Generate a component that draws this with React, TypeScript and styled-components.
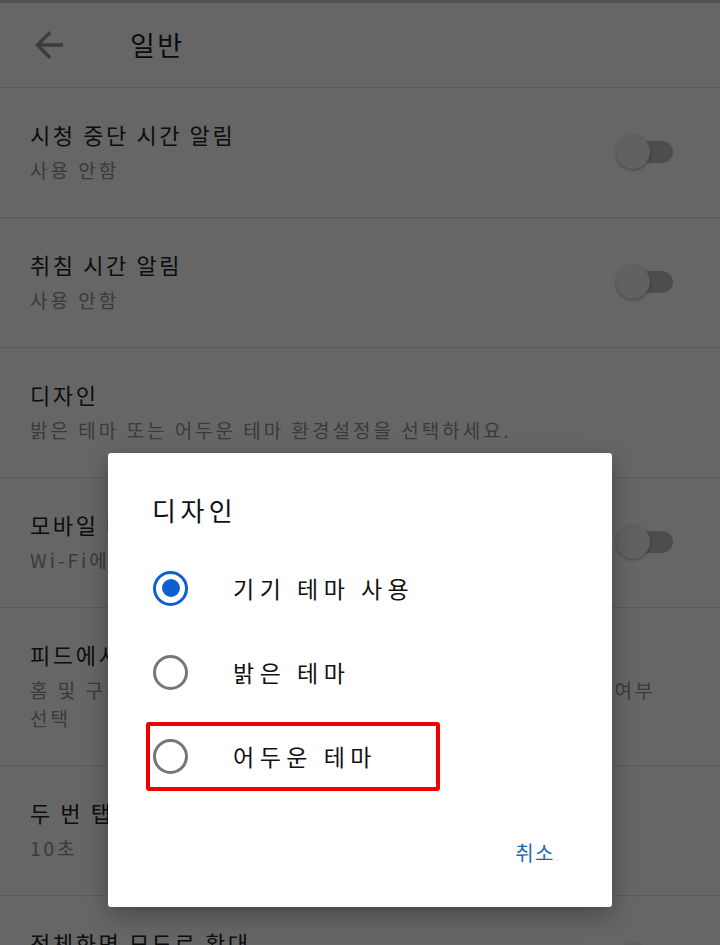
import React from "react";
import styled, { createGlobalStyle } from "styled-components";

const GlobalStyle = createGlobalStyle`
  html, body {
    margin: 0;
    padding: 0;
    background: #ffffff;
  }
  body {
    font-family: "Noto Sans CJK KR", "Noto Sans", "Liberation Sans", sans-serif;
  }
  * { box-sizing: border-box; }
`;

const Page = styled.div`
  position: relative;
  width: 720px;
  height: 945px;
  overflow: hidden;
  background: #ffffff;
`;

const TopStrip = styled.div`
  height: 3px;
  background: #d2d2d2;
`;

const Header = styled.header`
  height: 85px;
  display: flex;
  align-items: center;
  border-bottom: 1px solid #e2e2e2;
`;

const BackButton = styled.button`
  width: 42px;
  height: 42px;
  margin-left: 28px;
  padding: 0;
  border: none;
  background: transparent;
  display: flex;
  align-items: center;
  justify-content: center;
  color: #979797;
`;

const HeaderTitle = styled.h1`
  margin: 0 0 0 60px;
  font-size: 27px;
  font-weight: 400;
  letter-spacing: 2.5px;
  color: #222222;
  line-height: 36px;
`;

const List = styled.div`
  display: flex;
  flex-direction: column;
`;

const Row = styled.div`
  display: flex;
  align-items: center;
  padding: 31px 47px 33px 30px;
  border-bottom: 1px solid #e2e2e2;
`;

const RowText = styled.div`
  flex: 1;
  display: flex;
  flex-direction: column;
  gap: 7px;
  min-width: 0;
`;

const RowTitle = styled.div`
  font-size: 22px;
  line-height: 30px;
  letter-spacing: 2.6px;
  color: #232323;
`;

const RowSub = styled.div`
  font-size: 19px;
  line-height: 28px;
  letter-spacing: 3px;
  color: #919191;
`;

const ToggleWrap = styled.div`
  position: relative;
  flex: none;
  width: 57px;
  height: 34px;
  margin-left: 20px;
`;

const ToggleTrack = styled.div`
  position: absolute;
  right: 0;
  top: 6px;
  width: 50px;
  height: 22px;
  border-radius: 11px;
  background: #c0c0c0;
`;

const ToggleThumb = styled.div`
  position: absolute;
  left: 0;
  top: 0;
  width: 34px;
  height: 34px;
  border-radius: 50%;
  background: #f2f2f2;
  box-shadow: 0 1px 3px rgba(0, 0, 0, 0.35);
`;

const Toggle = () => (
  <ToggleWrap>
    <ToggleTrack />
    <ToggleThumb />
  </ToggleWrap>
);

const Overlay = styled.div`
  position: absolute;
  inset: 0;
  background: rgba(0, 0, 0, 0.6);
  display: flex;
  justify-content: center;
  align-items: flex-start;
  padding-top: 453px;
`;

const Dialog = styled.div`
  width: 504px;
  height: 454px;
  background: #ffffff;
  border-radius: 3px;
  box-shadow: 0 8px 24px rgba(0, 0, 0, 0.3);
  display: flex;
  flex-direction: column;
`;

const DialogTitle = styled.h2`
  margin: 39px 0 19px 44px;
  font-size: 26px;
  line-height: 35px;
  font-weight: 400;
  letter-spacing: 4.5px;
  color: #111111;
`;

const Option = styled.div`
  position: relative;
  height: 84px;
  display: flex;
  align-items: center;
  padding-left: 45px;
  gap: 45px;
`;

const Radio = styled.span<{ $checked?: boolean }>`
  flex: none;
  width: 35px;
  height: 35px;
  border-radius: 50%;
  border: 3.5px solid ${(p) => (p.$checked ? "#0f5fd2" : "#767676")};
  display: flex;
  align-items: center;
  justify-content: center;
  &::after {
    content: "";
    width: 18px;
    height: 18px;
    border-radius: 50%;
    background: ${(p) => (p.$checked ? "#0f5fd2" : "transparent")};
  }
`;

const OptionLabel = styled.span`
  font-size: 23px;
  line-height: 32px;
  letter-spacing: 5.5px;
  color: #111111;
`;

const Highlight = styled.div`
  position: absolute;
  left: 38px;
  top: 8px;
  width: 294px;
  height: 69px;
  border: 4px solid #f20000;
  border-radius: 3px;
  pointer-events: none;
`;

const DialogFooter = styled.div`
  margin-top: 30px;
  display: flex;
  justify-content: flex-end;
  padding-right: 45px;
`;

const TextButton = styled.button`
  height: 48px;
  padding: 0 12px;
  border: none;
  background: transparent;
  font-family: inherit;
  font-size: 20px;
  letter-spacing: 1.5px;
  color: #1f65b8;
`;

const BackIcon = () => (
  <svg width="42" height="42" viewBox="0 0 24 24" fill="currentColor">
    <path d="M20 11H7.83l5.59-5.59L12 4l-8 8 8 8 1.41-1.41L7.83 13H20v-2z" />
  </svg>
);

type Setting = { title: string; sub: string; toggle?: boolean };

const settings: Setting[] = [
  { title: "시청 중단 시간 알림", sub: "사용 안함", toggle: true },
  { title: "취침 시간 알림", sub: "사용 안함", toggle: true },
  { title: "디자인", sub: "밝은 테마 또는 어두운 테마 환경설정을 선택하세요." },
  {
    title: "모바일 데이터 사용 제한",
    sub: "Wi-Fi에 연결된 경우에만 HD 동영상 스트리밍",
    toggle: true,
  },
  {
    title: "피드에서 음소거 재생",
    sub: "홈 및 구독 피드에서 동영상을 볼 때 음소거 상태로 재생할지의 여부 선택",
  },
  { title: "두 번 탭하여 탐색", sub: "10초" },
  { title: "전체화면 모드로 확대", sub: "사용 안함", toggle: true },
];

const options = [
  { label: "기기 테마 사용", checked: true },
  { label: "밝은 테마" },
  { label: "어두운 테마", highlighted: true },
];

export default function App() {
  return (
    <>
      <GlobalStyle />
      <Page>
        <TopStrip />
        <Header>
          <BackButton aria-label="뒤로">
            <BackIcon />
          </BackButton>
          <HeaderTitle>일반</HeaderTitle>
        </Header>
        <List>
          {settings.map((s) => (
            <Row key={s.title}>
              <RowText>
                <RowTitle>{s.title}</RowTitle>
                <RowSub>{s.sub}</RowSub>
              </RowText>
              {s.toggle && <Toggle />}
            </Row>
          ))}
        </List>
        <Overlay>
          <Dialog role="dialog">
            <DialogTitle>디자인</DialogTitle>
            {options.map((o) => (
              <Option key={o.label}>
                <Radio $checked={o.checked} />
                <OptionLabel>{o.label}</OptionLabel>
                {o.highlighted && <Highlight />}
              </Option>
            ))}
            <DialogFooter>
              <TextButton>취소</TextButton>
            </DialogFooter>
          </Dialog>
        </Overlay>
      </Page>
    </>
  );
}
